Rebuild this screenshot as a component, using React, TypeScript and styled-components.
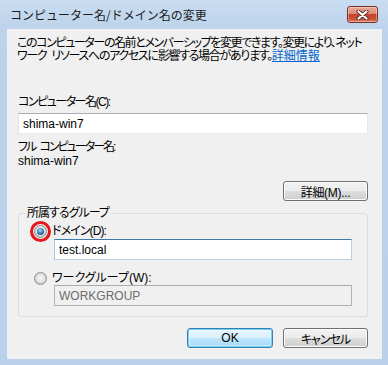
import React from "react";
import styled, { createGlobalStyle, css } from "styled-components";

const GlobalStyle = createGlobalStyle`
  html, body { margin: 0; padding: 0; background: #ffffff; }
  body {
    font-family: "Liberation Sans", "Noto Sans CJK JP", sans-serif;
    font-size: 12px;
    color: #000;
  }
  * { box-sizing: border-box; }
`;

const Window = styled.div`
  width: 388px;
  height: 365px;
  display: flex;
  flex-direction: column;
  background: linear-gradient(#c9dcf1, #bcd3eb 30px, #b9d1ea);
  padding: 0 6px 6px 7px;
`;

const TitleBar = styled.div`
  height: 29px;
  display: flex;
  align-items: center;
  padding-left: 3px;
`;

const TitleText = styled.span`
  font-size: 12px;
  line-height: 14px;
  color: #1b1b1b;
  font-family: "Noto Sans CJK JP", sans-serif;
`;

const CloseButton = styled.div`
  margin-left: auto;
  margin-right: 4px;
  width: 31px;
  height: 17px;
  border: 1px solid #7b3129;
  border-radius: 3px;
  display: flex;
  align-items: center;
  justify-content: center;
  background: linear-gradient(#eaa898 0%, #dc8a76 45%, #c7432b 50%, #c94f36 80%, #e08769 100%);
  box-shadow: inset 0 0 0 1px rgba(255, 255, 255, 0.35);
`;

const Client = styled.div`
  flex: 1;
  background: #f0f0f0;
  padding: 8px 14px 0 11px;
  display: flex;
  flex-direction: column;
  font-feature-settings: "palt";
`;

const Description = styled.div`
  margin: 0 0 0 -1px;
  display: flex;
  flex-direction: column;
`;

const DescLine = styled.div`
  line-height: 13px;
  white-space: pre;
`;

const Run = styled.span<{ $tight: number }>`
  letter-spacing: ${(p) => -p.$tight}px;
  word-spacing: 3px;
`;

const Link = styled.a`
  color: #0066cc;
  text-decoration: underline;
  letter-spacing: 0;
`;

const Label = styled.div<{ $gap: number; $tight?: number }>`
  margin-top: ${(p) => p.$gap}px;
  line-height: 13px;
  white-space: pre;
  word-spacing: 3px;
  letter-spacing: ${(p) => -(p.$tight ?? 0)}px;
`;

type BoxKind = "normal" | "focus" | "disabled";

const TextBox = styled.div<{ $kind: BoxKind; $gap: number; $indent?: number }>`
  margin-top: ${(p) => p.$gap}px;
  margin-left: ${(p) => p.$indent ?? 0}px;
  height: 21px;
  display: flex;
  align-items: center;
  padding-left: 4px;
  font-size: 12px;
  ${(p) =>
    p.$kind === "normal" &&
    css`
      background: #ffffff;
      border: 1px solid #e3e9ef;
      border-top-color: #abadb3;
      border-left-color: #e2e3ea;
    `}
  ${(p) =>
    p.$kind === "focus" &&
    css`
      background: #ffffff;
      border: 1px solid #b5cfe7;
      border-top-color: #3d7bad;
      border-left-color: #a4c9e3;
    `}
  ${(p) =>
    p.$kind === "disabled" &&
    css`
      background: #f0f0f0;
      border: 1px solid #b2b2b2;
      border-top-color: #adadad;
      color: #6d6d6d;
    `}
`;

const ButtonRow = styled.div<{ $gap: number }>`
  margin-top: ${(p) => p.$gap}px;
  display: flex;
  justify-content: flex-end;
  gap: 10px;
`;

const Button = styled.button<{ $default?: boolean; $width: number; $tight?: number }>`
  width: ${(p) => p.$width}px;
  height: 20px;
  padding: 0;
  font: inherit;
  font-size: 12px;
  letter-spacing: ${(p) => -(p.$tight ?? 0)}px;
  color: #000;
  border-radius: 3px;
  border: 1px solid #707070;
  background: linear-gradient(#f2f2f2 0%, #ebebeb 50%, #dddddd 51%, #cfcfcf 100%);
  box-shadow: inset 0 0 0 1px #fcfcfc;
  ${(p) =>
    p.$default &&
    css`
      border-color: #3c7fb1;
      background: linear-gradient(#eaf6fd 0%, #d9f0fc 50%, #bee6fd 51%, #a7d9f5 100%);
      box-shadow: inset 0 0 0 1px #6fd0f5, inset 0 0 0 2px rgba(255, 255, 255, 0.4);
    `}
`;

const GroupBox = styled.fieldset`
  margin: 6px 0 0 0;
  padding: 0 15px 10px 15px;
  border: 1px solid #d5dfe5;
  border-radius: 3px;
  min-width: 0;
`;

const Legend = styled.legend`
  margin-left: -9px;
  padding: 0 2px;
  line-height: 13px;
  font-size: 12px;
  letter-spacing: -1px;
`;

const RadioRow = styled.label<{ $gap: number; $tight?: number }>`
  margin-top: ${(p) => p.$gap}px;
  height: 14px;
  display: flex;
  align-items: center;
  gap: 5px;
  line-height: 13px;
  white-space: nowrap;
  letter-spacing: ${(p) => -(p.$tight ?? 0)}px;
`;

const RadioCircle = styled.span<{ $checked?: boolean }>`
  position: relative;
  flex: none;
  width: 13px;
  height: 13px;
  border-radius: 50%;
  border: 1px solid #8d8d8d;
  background: radial-gradient(circle at 50% 45%, #f4f4f4 0%, #e6e6e6 45%, #c9c9c9 75%, #ebebeb 100%);
  display: flex;
  align-items: center;
  justify-content: center;
  &::after {
    content: "";
    display: ${(p) => (p.$checked ? "block" : "none")};
    width: 7px;
    height: 7px;
    border-radius: 50%;
    background: radial-gradient(circle at 45% 35%, #b8e0fa 0%, #4f97c9 35%, #1d5b8a 70%, #0b3352 100%);
  }
`;

const Highlight = styled.span`
  position: absolute;
  top: -5px;
  left: -5px;
  width: 21px;
  height: 21px;
  border-radius: 50%;
  border: 3px solid #e5161c;
  pointer-events: none;
`;

function CloseGlyph() {
  return (
    <svg width="13" height="10" viewBox="0 0 13 10">
      <path d="M2.5 1.5 L10.5 8.5 M10.5 1.5 L2.5 8.5" stroke="#5a2a24" strokeWidth="4" strokeLinecap="round" />
      <path d="M2.5 1.5 L10.5 8.5 M10.5 1.5 L2.5 8.5" stroke="#ffffff" strokeWidth="2.2" strokeLinecap="round" />
    </svg>
  );
}

export default function App() {
  return (
    <>
      <GlobalStyle />
      <Window>
        <TitleBar>
          <TitleText>コンピューター名/ドメイン名の変更</TitleText>
          <CloseButton>
            <CloseGlyph />
          </CloseButton>
        </TitleBar>
        <Client>
          <Description>
            <DescLine>
              <Run $tight={1.4}>このコンピューターの名前とメンバーシップを変更できます。変更により、ネット</Run>
            </DescLine>
            <DescLine>
              <Run $tight={1.3}>ワーク リソースへのアクセスに影響する場合があります。</Run>
              <Link>詳細情報</Link>
            </DescLine>
          </Description>
          <Label $gap={33} $tight={1.5}>コンピューター名(C):</Label>
          <TextBox $kind="normal" $gap={4}>shima-win7</TextBox>
          <Label $gap={7} $tight={2}>フル コンピューター名:</Label>
          <Label $gap={1}>shima-win7</Label>
          <ButtonRow $gap={13}>
            <Button $width={85} $tight={0.3}>詳細(M)...</Button>
          </ButtonRow>
          <GroupBox>
            <Legend>所属するグループ</Legend>
            <RadioRow $gap={4} $tight={0.9}>
              <RadioCircle $checked>
                <Highlight />
              </RadioCircle>
              ドメイン(D):
            </RadioRow>
            <TextBox $kind="focus" $gap={1} $indent={20}>test.local</TextBox>
            <RadioRow $gap={11}>
              <RadioCircle />
              ワークグループ(W):
            </RadioRow>
            <TextBox $kind="disabled" $gap={0} $indent={20}>WORKGROUP</TextBox>
          </GroupBox>
          <ButtonRow $gap={11}>
            <Button $default $width={86}>OK</Button>
            <Button $width={85} $tight={1}>キャンセル</Button>
          </ButtonRow>
        </Client>
      </Window>
    </>
  );
}
